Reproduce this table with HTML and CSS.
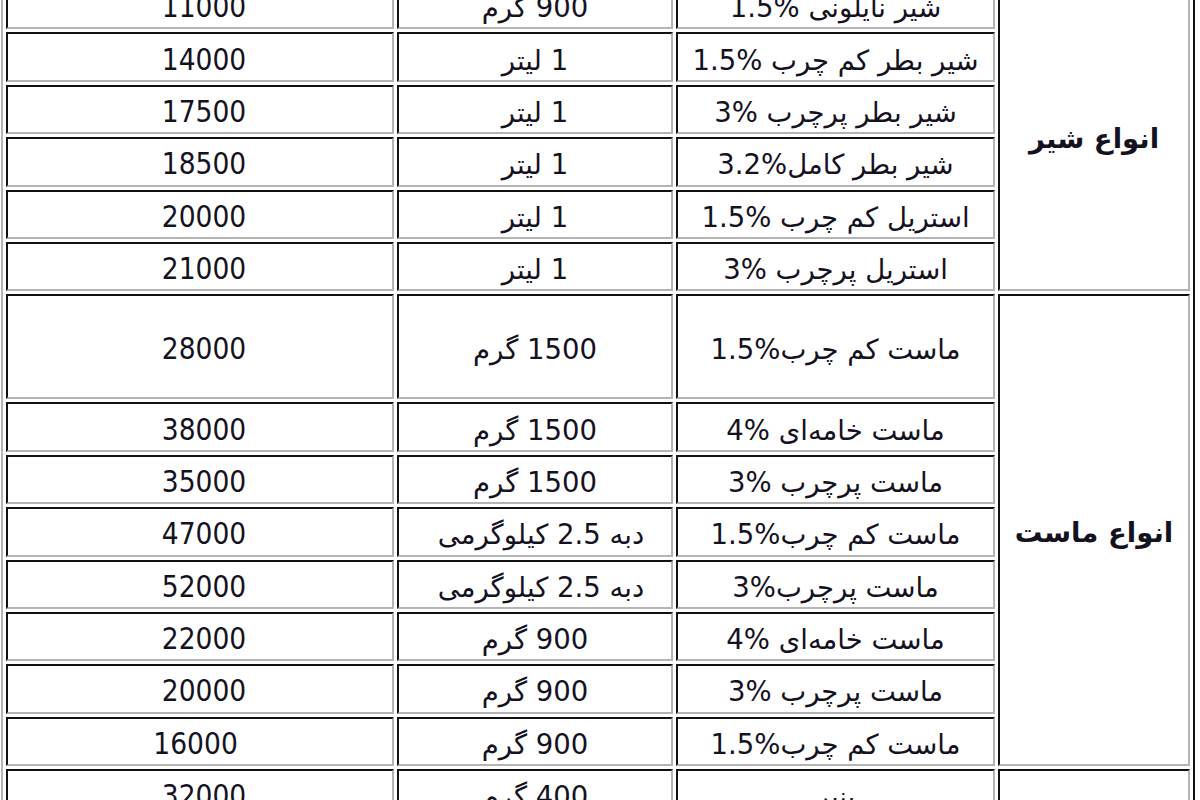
FILE: index.html
```html
<!DOCTYPE html>
<html lang="fa">
<head>
<meta charset="utf-8">
<title>قیمت لبنیات</title>
<link rel="stylesheet" href="styles.css">
</head>
<body>
<table class="price" dir="rtl">
  <colgroup>
    <col class="c-cat">
    <col class="c-name">
    <col class="c-size">
    <col class="c-price">
  </colgroup>
  <tbody>
    <tr>
      <td class="cat" rowspan="6">انواع شیر</td>
      <td>شیر نایلونی %1.5</td>
      <td>900 گرم</td>
      <td class="num">11000</td>
    </tr>
    <tr><td>شیر بطر کم چرب %1.5</td><td>1 لیتر</td><td class="num">14000</td></tr>
    <tr><td>شیر بطر پرچرب %3</td><td>1 لیتر</td><td class="num">17500</td></tr>
    <tr><td>شیر بطر کامل%3.2</td><td>1 لیتر</td><td class="num">18500</td></tr>
    <tr><td>استریل کم چرب %1.5</td><td>1 لیتر</td><td class="num">20000</td></tr>
    <tr><td>استریل پرچرب %3</td><td>1 لیتر</td><td class="num">21000</td></tr>
    <tr class="tall">
      <td class="cat" rowspan="8">انواع ماست</td>
      <td>ماست کم چرب%1.5</td>
      <td>1500 گرم</td>
      <td class="num">28000</td>
    </tr>
    <tr><td>ماست خامه‌ای %4</td><td>1500 گرم</td><td class="num">38000</td></tr>
    <tr><td>ماست پرچرب %3</td><td>1500 گرم</td><td class="num">35000</td></tr>
    <tr><td>ماست کم چرب%1.5</td><td class="wide">دبه 2.5 کیلوگرمی</td><td class="num">47000</td></tr>
    <tr><td>ماست پرچرب%3</td><td class="wide">دبه 2.5 کیلوگرمی</td><td class="num">52000</td></tr>
    <tr><td>ماست خامه‌ای %4</td><td>900 گرم</td><td class="num">22000</td></tr>
    <tr><td>ماست پرچرب %3</td><td>900 گرم</td><td class="num">20000</td></tr>
    <tr><td>ماست کم چرب%1.5</td><td>900 گرم</td><td class="num">&nbsp;&nbsp;16000</td></tr>
    <tr>
      <td class="cat" rowspan="4">انواع پنیر</td>
      <td>پنیر</td>
      <td>400 گرم</td>
      <td class="num">32000</td>
    </tr>
    <tr><td>پنیر خامه‌ای</td><td>400 گرم</td><td class="num">30000</td></tr>
    <tr><td>پنیر سفید</td><td>400 گرم</td><td class="num">28000</td></tr>
    <tr><td>پنیر لاکتیکی</td><td>400 گرم</td><td class="num">26000</td></tr>
  </tbody>
</table>
</body>
</html>
```

FILE: styles.css
```css
html, body {
  margin: 0;
  padding: 0;
  background: #ffffff;
}

body {
  width: 1200px;
  height: 800px;
  overflow: hidden;
}

.price {
  margin: -25px 0 0 1px;
  width: 1194px;
  table-layout: fixed;
  border-collapse: separate;
  border-spacing: 3px;
  border-style: solid;
  border-width: 2px;
  border-color: #b4b4b4 #111111 #111111 #b4b4b4;
  font-family: "DejaVu Sans", Tahoma, sans-serif;
  font-size: 27.5px;
  color: #15121f;
}

.c-cat { width: 192px; }
.c-name { width: 319px; }
.c-size { width: 276px; }
.c-price { width: 388px; }

.price td {
  box-sizing: border-box;
  height: 49.4px;
  padding: 5px 0 0 0;
  text-align: center;
  vertical-align: middle;
  white-space: nowrap;
  border-style: solid;
  border-width: 2px;
  border-color: #111111 #b4b4b4 #b4b4b4 #111111;
  line-height: 30px;
}

.price .tall td {
  height: 105px;
}

.price td.cat {
  font-weight: bold;
  padding-top: 4px;
}

.price td.wide {
  padding-left: 12px;
}

.price td.num {
  font-family: "DejaVu Sans Condensed", "DejaVu Sans", sans-serif;
  font-size: 29.5px;
  padding-left: 8px;
}
```
